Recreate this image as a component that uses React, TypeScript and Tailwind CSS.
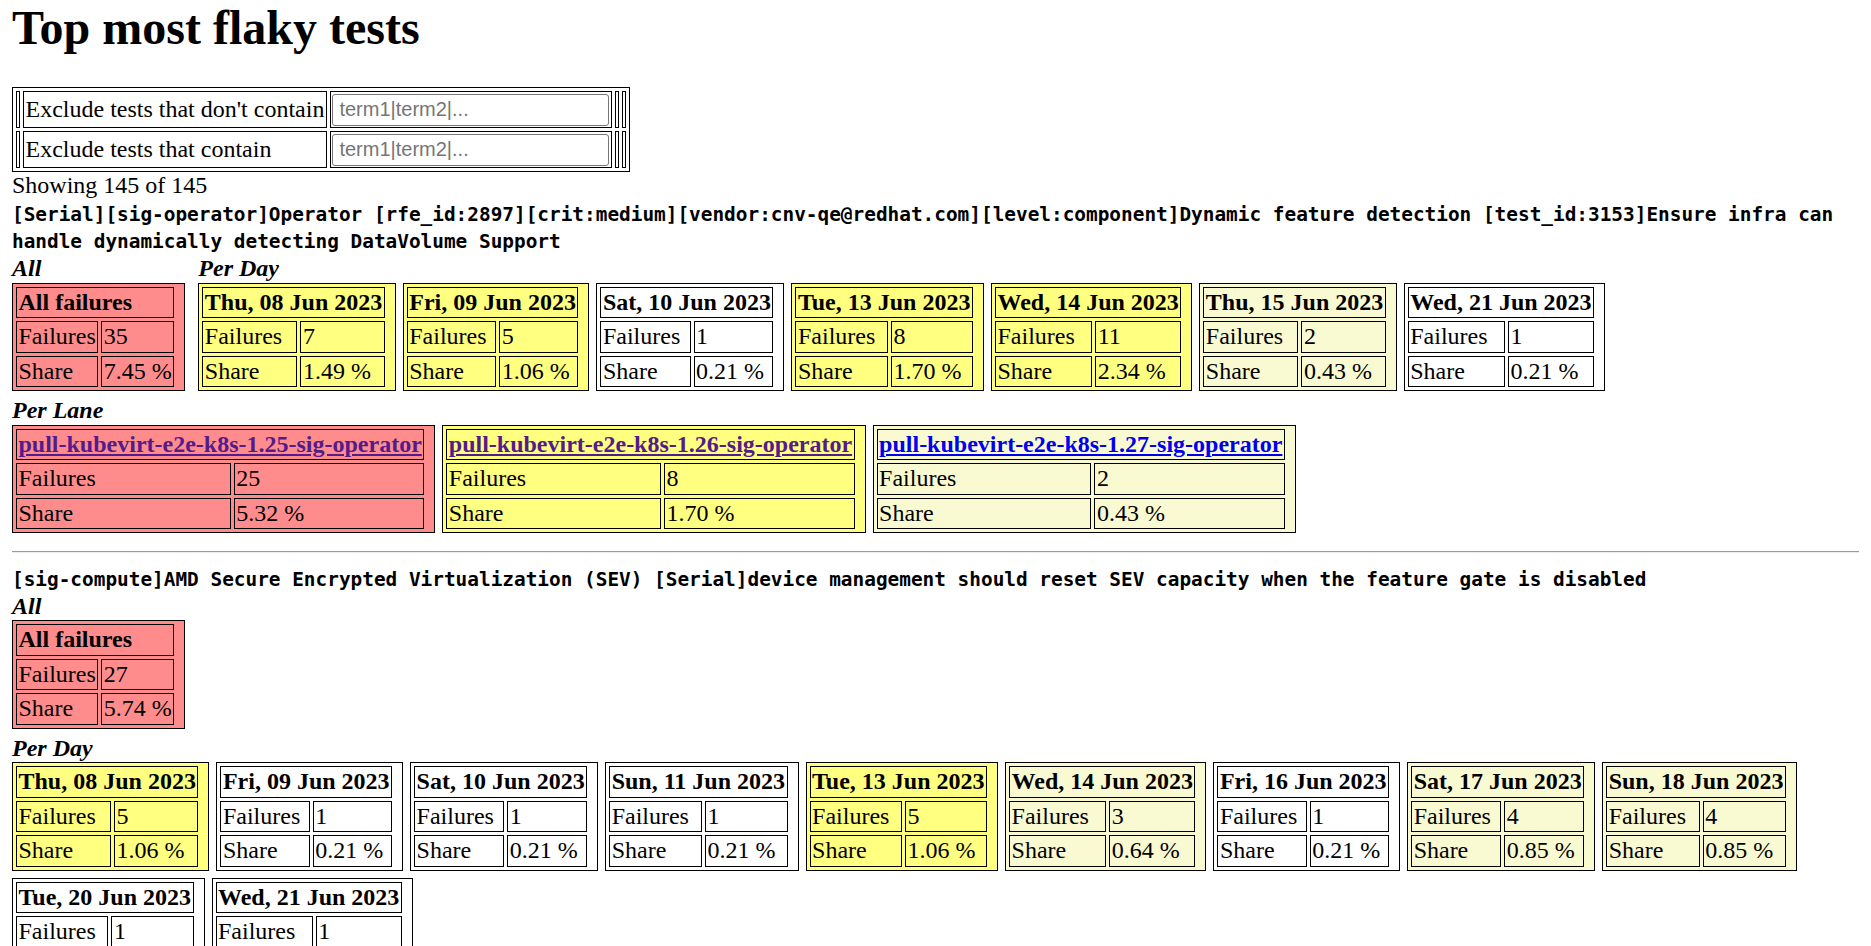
import clsx from 'clsx'

type Stat = { title: string; failures: number; share: string }
type Lane = Stat & { visited: boolean }
type Test = { name: string; all: Stat; days: Stat[]; lanes: Lane[] }

const tests: Test[] = [
  {
    name: '[Serial][sig-operator]Operator [rfe_id:2897][crit:medium][vendor:cnv-qe@redhat.com][level:component]Dynamic feature detection [test_id:3153]Ensure infra can handle dynamically detecting DataVolume Support',
    all: { title: 'All failures', failures: 35, share: '7.45' },
    days: [
      { title: 'Thu, 08 Jun 2023', failures: 7, share: '1.49' },
      { title: 'Fri, 09 Jun 2023', failures: 5, share: '1.06' },
      { title: 'Sat, 10 Jun 2023', failures: 1, share: '0.21' },
      { title: 'Tue, 13 Jun 2023', failures: 8, share: '1.70' },
      { title: 'Wed, 14 Jun 2023', failures: 11, share: '2.34' },
      { title: 'Thu, 15 Jun 2023', failures: 2, share: '0.43' },
      { title: 'Wed, 21 Jun 2023', failures: 1, share: '0.21' },
    ],
    lanes: [
      { title: 'pull-kubevirt-e2e-k8s-1.25-sig-operator', failures: 25, share: '5.32', visited: true },
      { title: 'pull-kubevirt-e2e-k8s-1.26-sig-operator', failures: 8, share: '1.70', visited: true },
      { title: 'pull-kubevirt-e2e-k8s-1.27-sig-operator', failures: 2, share: '0.43', visited: false },
    ],
  },
  {
    name: '[sig-compute]AMD Secure Encrypted Virtualization (SEV) [Serial]device management should reset SEV capacity when the feature gate is disabled',
    all: { title: 'All failures', failures: 27, share: '5.74' },
    days: [
      { title: 'Thu, 08 Jun 2023', failures: 5, share: '1.06' },
      { title: 'Fri, 09 Jun 2023', failures: 1, share: '0.21' },
      { title: 'Sat, 10 Jun 2023', failures: 1, share: '0.21' },
      { title: 'Sun, 11 Jun 2023', failures: 1, share: '0.21' },
      { title: 'Tue, 13 Jun 2023', failures: 5, share: '1.06' },
      { title: 'Wed, 14 Jun 2023', failures: 3, share: '0.64' },
      { title: 'Fri, 16 Jun 2023', failures: 1, share: '0.21' },
      { title: 'Sat, 17 Jun 2023', failures: 4, share: '0.85' },
      { title: 'Sun, 18 Jun 2023', failures: 4, share: '0.85' },
      { title: 'Tue, 20 Jun 2023', failures: 1, share: '0.21' },
      { title: 'Wed, 21 Jun 2023', failures: 1, share: '0.21' },
    ],
    lanes: [],
  },
]

// colour by share of all failures
const tone = (share: string) => {
  const v = parseFloat(share)
  if (v >= 5) return 'bg-[#ff8c8c]'
  if (v >= 1) return 'bg-[#ffff80]'
  if (v >= 0.4) return 'bg-[#fafad2]'
  return 'bg-white'
}

const cell = 'border border-black px-[1.5px] py-[1px] leading-[27.5px] whitespace-nowrap text-left'

const StatTable = ({ stat, link }: { stat: Stat; link?: 'visited' | 'new' }) => (
  <table className={clsx('border border-black border-separate border-spacing-[3px]', tone(stat.share))}>
    <tbody>
      <tr>
        <td colSpan={2} className={clsx(cell, 'font-bold')}>
          {link ? (
            <a href="#" className={clsx('underline', link === 'visited' ? 'text-[#551a8b]' : 'text-[#0000ee]')}>
              {stat.title}
            </a>
          ) : (
            stat.title
          )}
        </td>
        <td rowSpan={3} className="w-[4px] p-0" />
      </tr>
      <tr>
        <td className={cell}>Failures</td>
        <td className={cell}>{stat.failures}</td>
      </tr>
      <tr>
        <td className={cell}>Share</td>
        <td className={cell}>{stat.share} %</td>
      </tr>
    </tbody>
  </table>
)

const Group = ({ label, children }: { label: string; children: React.ReactNode }) => (
  <div className="pb-[6px]">
    <div className="font-bold italic">{label}</div>
    {children}
  </div>
)

const Filter = () => (
  <table className="border border-black border-separate border-spacing-[3px]">
    <tbody>
      {["Exclude tests that don't contain", 'Exclude tests that contain'].map((label) => (
        <tr key={label}>
          <td className="w-[4px] border border-black p-0" />
          <td className="border border-black px-[1.5px] whitespace-nowrap">{label}</td>
          <td className="border border-black p-[1.5px]">
            <input
              placeholder="term1|term2|..."
              className="block h-[32px] w-[277px] rounded-[3px] border border-[#767676] px-[6px] font-['Liberation_Sans',sans-serif] text-[20px] placeholder:text-[#757575]"
            />
          </td>
          <td className="w-[4px] border border-black p-0" />
          <td className="w-[4px] border border-black p-0" />
        </tr>
      ))}
    </tbody>
  </table>
)

const TestBlock = ({ test }: { test: Test }) => (
  <section>
    <div>
      <span className="font-['DejaVu_Sans_Mono',monospace] text-[19.4px] font-bold">{test.name}</span>
    </div>
    <div className="flex flex-wrap gap-x-[13px]">
      <Group label="All">
        <StatTable stat={test.all} />
      </Group>
      <Group label="Per Day">
        <div className="flex flex-wrap gap-[7px]">
          {test.days.map((d) => (
            <StatTable key={d.title} stat={d} />
          ))}
        </div>
      </Group>
      {test.lanes.length > 0 && (
        <Group label="Per Lane">
          <div className="flex flex-wrap gap-[7px]">
            {test.lanes.map((l) => (
              <StatTable key={l.title} stat={l} link={l.visited ? 'visited' : 'new'} />
            ))}
          </div>
        </Group>
      )}
    </div>
  </section>
)

const App = () => (
  <div className="min-h-screen bg-white px-[12px] font-['Liberation_Serif',serif] text-[24px] leading-[1.15] text-black">
    <h1 className="mb-[32px] text-[48px] leading-[1.15] font-bold">Top most flaky tests</h1>
    <Filter />
    <div>Showing 145 of 145</div>
    {tests.map((t, i) => (
      <div key={t.name}>
        <TestBlock test={t} />
        {i < tests.length - 1 && (
          <hr className="my-[12px] h-0 border-t border-b border-t-[#9a9a9a] border-b-[#eeeeee]" />
        )}
      </div>
    ))}
  </div>
)

export default App
